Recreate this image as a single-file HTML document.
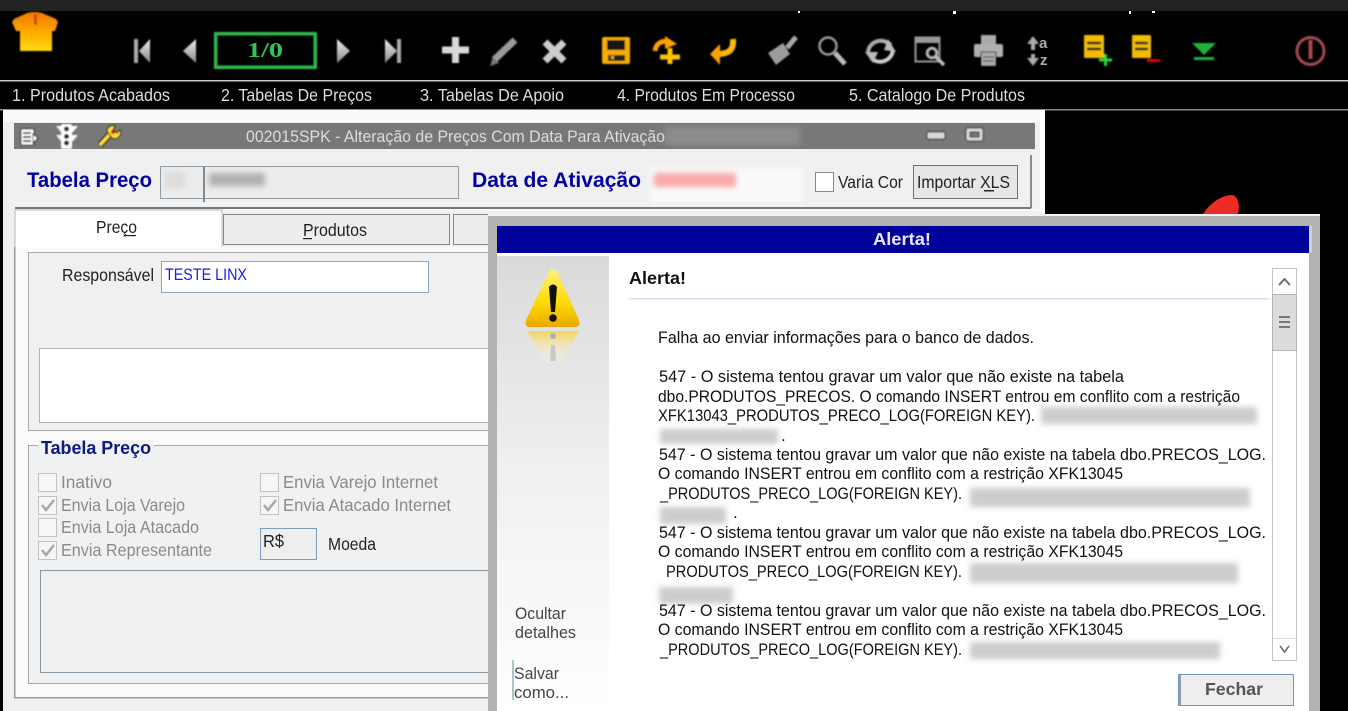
<!DOCTYPE html>
<html lang="pt"><head><meta charset="utf-8"><title>Alerta</title>
<style>
html,body{margin:0;padding:0;width:1348px;height:711px;overflow:hidden;background:#000}
svg{display:block}
text{font-family:"Liberation Sans",sans-serif;font-size:16.5px;fill:#1c1c1c;white-space:pre}
.m{fill:#ddd;font-size:17.5px}
.g{fill:#8a8a8a;font-size:17.5px}
.b{font-weight:bold;fill:#0000a0;font-size:21px}
.t{fill:#111;font-size:17px}
.d{font-size:17.5px;fill:#222}
.l{font-size:17px;fill:#444}
</style></head><body>
<svg width="1348" height="711" viewBox="0 0 1348 711" xmlns="http://www.w3.org/2000/svg">
<defs>
<filter id="s" x="-10%" y="-10%" width="120%" height="120%"><feGaussianBlur stdDeviation="0.8"/></filter>
<filter id="b" x="-20%" y="-50%" width="140%" height="200%"><feGaussianBlur stdDeviation="3"/></filter>
<filter id="t" x="-5%" y="-20%" width="110%" height="140%"><feGaussianBlur stdDeviation="0.3"/></filter>
<linearGradient id="sh" x1="0" y1="0" x2="0" y2="1"><stop offset="0" stop-color="#f07800"/><stop offset=".5" stop-color="#ffa800"/><stop offset="1" stop-color="#ffdc10"/></linearGradient>
<linearGradient id="gr" x1="0" y1="0" x2="0" y2="1"><stop offset="0" stop-color="#eee"/><stop offset="1" stop-color="#888"/></linearGradient>
<linearGradient id="pn" x1="0" y1="0" x2="0" y2="1"><stop offset="0" stop-color="#dadada"/><stop offset=".45" stop-color="#efefef"/><stop offset="1" stop-color="#fff"/></linearGradient>
<linearGradient id="wa" x1="0" y1="0" x2="0" y2="1"><stop offset="0" stop-color="#fff27a"/><stop offset=".6" stop-color="#ffd800"/><stop offset="1" stop-color="#e8a800"/></linearGradient>
<linearGradient id="wr" x1="0" y1="0" x2="0" y2="1"><stop offset="0" stop-color="#f2d35a"/><stop offset="1" stop-color="#fff" stop-opacity="0"/></linearGradient>
</defs>
<rect width="1348" height="711" fill="#000"/>
<rect width="1348" height="11" fill="#222"/>
<g fill="#fff"><rect x="798" y="11" width="2" height="2"/><rect x="953" y="11" width="3" height="3"/><rect x="1129" y="11" width="2" height="3"/><rect x="1152" y="11" width="3" height="2"/></g>

<!-- toolbar -->
<g filter="url(#s)">
<path d="M27 13 Q34 11 42 13 L56 19 L58 22 L55 31 L52 31 L52 51 L20 51 L20 31 L16 31 L12 22 L14 19 Z" fill="url(#sh)"/>
<path d="M34 14 l3 0 l0 11 l-3 0z" fill="#d84c00"/>
<g fill="#aaa">
<rect x="134" y="39" width="4" height="24"/><path d="M150 39 V63 L139 51Z" fill="url(#gr)"/>
<path d="M196 39 V63 L183 51Z" fill="url(#gr)"/>
<path d="M337 39 V63 L350 51Z" fill="url(#gr)"/>
<path d="M385 39 V63 L397 51Z" fill="url(#gr)"/><rect x="397" y="39" width="4" height="24"/>
</g>
<rect x="215.500" y="33.500" width="100" height="34" fill="#000" stroke="#2ebd4c" stroke-width="3"/>
<path d="M442 50 H469 M455.500 37 V63" stroke="#d8d8d8" stroke-width="7"/>
<path d="M494 60 L515 40" stroke="#999" stroke-width="7"/><path d="M490 66 l3 -9 l6 6z" fill="#777"/>
<path d="M545 42 L564 61 M564 42 L545 61" stroke="#ccc" stroke-width="7"/>
<rect x="602" y="37" width="28" height="27" rx="2" fill="#f5ae00"/><rect x="607" y="40" width="18" height="10" fill="#151515"/><rect x="608" y="55" width="17" height="6" fill="#222"/><rect x="611" y="56" width="3" height="3" fill="#f5ae00"/>
<path d="M655 51 C656 43 662 40 670 42" fill="none" stroke="#ff9f00" stroke-width="5"/><path d="M665 36 L677 44 L665 49Z" fill="#ff9f00"/><path d="M660 57 H680 M670 48 V64" stroke="#ffc000" stroke-width="5"/>
<path d="M733 39 C734 49 730 54 717 54" fill="none" stroke="#ffb800" stroke-width="6"/><path d="M720 44 L710 54 L720 65Z" fill="#ff9f00"/>
<path d="M768 53 L783 43 L790 54 L776 65Z" fill="#9c9c9c"/><path d="M787 48 L796 37" stroke="#a8a8a8" stroke-width="5"/>
<circle cx="828" cy="46" r="8.500" fill="none" stroke="#999" stroke-width="2.500"/><path d="M835 53 L845 64" stroke="#bbb" stroke-width="5"/>
<path d="M868 52 C869 43 880 36 891 45" fill="none" stroke="#aaa" stroke-width="4"/><path d="M893 50 C892 60 880 66 871 58" fill="none" stroke="#ccc" stroke-width="4"/><path d="M888 39 L896 52 L884 50Z" fill="#bbb"/><path d="M865 52 L878 52 L873 63Z" fill="#bbb"/>
<rect x="915.500" y="37.500" width="24" height="24" fill="none" stroke="#999" stroke-width="2"/><rect x="916" y="38" width="23" height="5" fill="#999"/><circle cx="932" cy="53" r="5" fill="#000" stroke="#bbb" stroke-width="2.500"/><path d="M936 57 L944 65" stroke="#bbb" stroke-width="3.500"/>
<rect x="981" y="35" width="15" height="10" fill="#aaa"/><rect x="974" y="44" width="29" height="13" rx="2" fill="#b0b0b0"/><rect x="981" y="52" width="15" height="14" fill="#aaa" stroke="#000"/><path d="M983 57 h11 M983 61 h11" stroke="#333"/>
<path d="M1033 36 l6 8 h-4 v6 h-4 v-6 h-4z M1033 66 l6 -8 h-4 v-4 h-4 v4 h-4z" fill="#aaa"/>
<rect x="1084" y="35" width="20" height="23" rx="1" fill="#f2bd00"/><path d="M1087 43 h14 M1087 49 h14" stroke="#222" stroke-width="2.500"/><path d="M1099 60 h13 M1105.500 54 v12" stroke="#1edc3c" stroke-width="3"/>
<rect x="1132" y="35" width="19" height="23" rx="1" fill="#f2bd00"/><path d="M1135 43 h13 M1135 49 h13" stroke="#222" stroke-width="2.500"/><rect x="1147" y="59" width="13" height="3" fill="#e00010"/>
<path d="M1192 43 H1216 L1204 55Z M1194 57 H1214 V60 H1194Z" fill="#1fb43a"/>
<circle cx="1310.500" cy="51" r="13.500" fill="none" stroke="#a84a50" stroke-width="3"/><path d="M1310.500 40 V59" stroke="#a84a50" stroke-width="4"/>
</g>
<text x="1039" y="48" style="font-size:15px;font-weight:bold;fill:#aaa">a</text>
<text x="1040" y="65" style="font-size:15px;font-weight:bold;fill:#aaa">z</text>
<text x="247" y="57" textLength="36" lengthAdjust="spacingAndGlyphs" style="font-family:'Liberation Serif',serif;font-weight:bold;font-size:21px;fill:#33c454">1/0</text>

<!-- menu -->
<rect y="80" width="1348" height="1.500" fill="#c8c8c8"/>
<rect y="109" width="1348" height="1.500" fill="#8a8a8a"/>
<g filter="url(#t)">
<text class="m" x="12" y="101" textLength="158" lengthAdjust="spacingAndGlyphs">1. Produtos Acabados</text>
<text class="m" x="221" y="101" textLength="151" lengthAdjust="spacingAndGlyphs">2. Tabelas De Preços</text>
<text class="m" x="420" y="101" textLength="144" lengthAdjust="spacingAndGlyphs">3. Tabelas De Apoio</text>
<text class="m" x="617" y="101" textLength="178" lengthAdjust="spacingAndGlyphs">4. Produtos Em Processo</text>
<text class="m" x="849" y="101" textLength="176" lengthAdjust="spacingAndGlyphs">5. Catalogo De Produtos</text>
</g>

<!-- main window -->
<rect x="3" y="110" width="1042" height="601" fill="#f0f0f0"/>
<rect x="3" y="110" width="1042" height="12" fill="#fafafa"/>
<rect x="1040" y="110" width="5" height="110" fill="#fff"/>
<rect x="14" y="123" width="1021" height="26" fill="#787878"/>
<rect x="665" y="127" width="135" height="18" fill="#8c8c8c" filter="url(#b)"/>
<text x="246" y="142" textLength="419" lengthAdjust="spacingAndGlyphs" style="fill:#dcdcdc;font-size:16.500px">002015SPK - Alteração de Preços Com Data Para Ativação</text>
<g filter="url(#s)">
<rect x="21" y="129" width="13" height="16" rx="1" fill="#fff" stroke="#000"/><path d="M23 133 h8 M23 137 h8 M23 141 h8" stroke="#000" stroke-width="1.500"/><path d="M33 134 l5 4 -5 5z" fill="#fff" stroke="#000"/>
<rect x="61" y="124" width="11" height="25" rx="2" fill="#fff"/><path d="M56 126 h22 l-5 6 h-12z M56 135 h22 l-5 6 h-12z" fill="#fff"/><circle cx="66.500" cy="129" r="2.500" fill="#222"/><circle cx="66.500" cy="136.500" r="2.500" fill="#222"/><circle cx="66.500" cy="143" r="2.500" fill="#222"/>
<path d="M100 145 L111 133" stroke="#000" stroke-width="6"/><path d="M100 145 L111 133" stroke="#ffe23c" stroke-width="3.500"/><path d="M107 131 a6 6 0 0 1 8 -5 l-2 4 4 3 3 -3 a6 6 0 0 1 -8 8z" fill="#ffe23c" stroke="#000"/><circle cx="113" cy="132" r="2" fill="#d01010"/>
<rect x="927" y="132" width="18" height="7" rx="1" fill="#d8d8d8" stroke="#000"/>
<rect x="966" y="128" width="17" height="13" rx="2" fill="#d8d8d8" stroke="#000"/><rect x="970" y="132" width="9" height="5" fill="#777" stroke="#000"/>
</g>

<!-- header fields -->
<text class="b" x="27" y="187" textLength="125" lengthAdjust="spacingAndGlyphs">Tabela Preço</text>
<rect x="160.500" y="166.500" width="298" height="32" fill="#ececec" stroke="#8f9ca6"/>
<rect x="203" y="166" width="2" height="36" fill="#7e8a94"/>
<rect x="165" y="172" width="20" height="16" fill="#dcdcdc" filter="url(#b)"/>
<rect x="209" y="173" width="56" height="13" fill="#b0b0b0" filter="url(#b)"/>
<text class="b" x="472" y="187" textLength="169" lengthAdjust="spacingAndGlyphs">Data de Ativação</text>
<rect x="650" y="168" width="152" height="34" fill="#fafafa" filter="url(#b)"/>
<rect x="654" y="173" width="82" height="14" fill="#f8a8a8" filter="url(#b)"/>
<rect x="815.500" y="172.500" width="18" height="19" fill="#fff" stroke="#888"/>
<text class="d" x="838" y="188" textLength="65" lengthAdjust="spacingAndGlyphs">Varia Cor</text>
<rect x="913.500" y="165.500" width="104" height="33" fill="#e6e6e6" stroke="#707070"/>
<text class="d" x="917" y="188" textLength="93" lengthAdjust="spacingAndGlyphs">Importar XLS</text>
<rect x="984" y="190" width="10" height="1.500" fill="#222"/>
<rect x="1030" y="155" width="2" height="53" fill="#8a8a8a"/>
<rect x="15" y="207" width="1016" height="2" fill="#777"/>

<!-- tabs -->
<rect x="15" y="209" width="1025" height="2" fill="#fafafa"/>
<rect x="15" y="247" width="474" height="450" fill="#fbfbfb"/>
<rect x="15" y="210" width="207" height="38" fill="#fff"/>
<path d="M15 248 V210 H222 V247" fill="none" stroke="#b8b8b8"/>
<text class="d" x="96" y="233" textLength="41" lengthAdjust="spacingAndGlyphs">Preço</text>
<rect x="124" y="235" width="12" height="1.200" fill="#222"/>
<rect x="223.500" y="214.500" width="226" height="30" fill="#ededed" stroke="#858585"/>
<text class="d" x="303" y="236" textLength="64" lengthAdjust="spacingAndGlyphs">Produtos</text>
<rect x="303" y="238" width="9" height="1.200" fill="#222"/>
<rect x="453.500" y="214.500" width="60" height="30" fill="#ededed" stroke="#858585"/>
<rect x="14" y="247" width="1.500" height="451" fill="#9a9a9a"/>
<rect x="14" y="697" width="476" height="1.500" fill="#9a9a9a"/>

<!-- group 1 -->
<rect x="28.500" y="252.500" width="470" height="178" fill="#f0f0f0" stroke="#a8a8a8"/>
<text class="d" x="62" y="281" textLength="92" lengthAdjust="spacingAndGlyphs">Responsável</text>
<rect x="161.500" y="261.500" width="267" height="31" fill="#fff" stroke="#8ba6bd"/>
<text x="165" y="280" textLength="82" lengthAdjust="spacingAndGlyphs" style="font-size:17px;fill:#1a1aee">TESTE LINX</text>
<rect x="39.500" y="348.500" width="460" height="74" fill="#fff" stroke="#aeb4ba"/>

<!-- group 2 -->
<rect x="28.500" y="445.500" width="470" height="238" fill="#f0f1f3" stroke="#a8a8a8"/>
<rect x="38" y="440" width="116" height="16" fill="#f2f2f4"/>
<text x="41" y="454" textLength="110" lengthAdjust="spacingAndGlyphs" style="font-size:18px;font-weight:bold;fill:#0a1a80">Tabela Preço</text>
<g fill="#f6f6f6" stroke="#c2c2c2">
<rect x="38.500" y="473.500" width="18" height="18"/><rect x="38.500" y="496.500" width="18" height="18"/><rect x="38.500" y="518.500" width="18" height="18"/><rect x="38.500" y="541.500" width="18" height="18"/><rect x="260.500" y="473.500" width="18" height="18"/><rect x="260.500" y="496.500" width="18" height="18"/>
</g>
<g fill="none" stroke="#a8a8a8" stroke-width="2.500">
<path d="M42 505 l4 5 l8 -10"/><path d="M42 550 l4 5 l8 -10"/><path d="M264 505 l4 5 l8 -10"/>
</g>
<text class="g" x="61" y="488" textLength="51" lengthAdjust="spacingAndGlyphs">Inativo</text>
<text class="g" x="61" y="511" textLength="124" lengthAdjust="spacingAndGlyphs">Envia Loja Varejo</text>
<text class="g" x="61" y="533" textLength="138" lengthAdjust="spacingAndGlyphs">Envia Loja Atacado</text>
<text class="g" x="61" y="556" textLength="151" lengthAdjust="spacingAndGlyphs">Envia Representante</text>
<text class="g" x="283" y="488" textLength="155" lengthAdjust="spacingAndGlyphs">Envia Varejo Internet</text>
<text class="g" x="283" y="511" textLength="168" lengthAdjust="spacingAndGlyphs">Envia Atacado Internet</text>
<rect x="260.500" y="528.500" width="56" height="31" fill="#eceef0" stroke="#7f9db8"/>
<text class="d" x="263" y="547" textLength="21" lengthAdjust="spacingAndGlyphs">R$</text>
<text class="d" x="328" y="550" textLength="48" lengthAdjust="spacingAndGlyphs">Moeda</text>
<rect x="40.500" y="570.500" width="460" height="102" fill="#eef0f2" stroke="#8a949c"/>

<!-- red shape -->
<path d="M1203 214 C1210 203 1222 195 1232 195 C1238 196 1240 204 1238 214Z" fill="#ee2b24"/>

<!-- dialog -->
<rect x="488" y="214" width="832" height="497" fill="#b2b2b2"/>
<rect x="488" y="214" width="832" height="2" fill="#f4f4f4"/>
<rect x="497" y="226" width="812" height="485" fill="#fff"/>
<rect x="497" y="226" width="812" height="27" fill="#00009a"/>
<rect x="1309" y="226" width="3" height="27" fill="#d0d4dc"/>
<text x="873" y="245" textLength="58" lengthAdjust="spacingAndGlyphs" style="font-size:17.500px;font-weight:bold;fill:#e8e8ff">Alerta!</text>
<rect x="497" y="256" width="112" height="455" fill="url(#pn)"/>

<!-- warning -->
<path d="M553 269 C556 269 558 273 560 278 L578 318 C581 325 579 327 574 327 H531 C526 327 524 325 527 318 L546 278 C548 273 550 269 553 269Z" fill="url(#wa)"/>
<path d="M549 287 Q553 282 557 287 L555 312 H551Z" fill="#111"/><circle cx="553" cy="318" r="3.800" fill="#111"/>
<path d="M527 331 H579 L560 365 H546Z" fill="url(#wr)"/>
<circle cx="553" cy="336" r="3" fill="#b0b0b8"/><path d="M551 345 h4 l1 16 h-6z" fill="#c8c8cc"/>

<!-- redacted regions, painted beneath the message text -->
<g fill="#cccccc" filter="url(#b)">
<rect x="1041" y="407" width="216" height="17"/>
<rect x="660" y="429" width="118" height="15"/>
<rect x="970" y="488" width="280" height="19"/>
<rect x="660" y="507" width="66" height="17"/>
<rect x="970" y="563" width="268" height="20"/>
<rect x="659" y="587" width="74" height="17"/>
<rect x="970" y="642" width="250" height="17"/>
</g>

<!-- alert text -->
<text x="629" y="284" textLength="57" lengthAdjust="spacingAndGlyphs" style="font-size:17.500px;font-weight:bold;fill:#111">Alerta!</text>
<rect x="629" y="298" width="640" height="1.500" fill="#d8d8f0"/>
<g>
<text class="t" x="658" y="343" textLength="376" lengthAdjust="spacingAndGlyphs">Falha ao enviar informações para o banco de dados.</text>
<text class="t" x="659" y="382" textLength="465" lengthAdjust="spacingAndGlyphs">547 - O sistema tentou gravar um valor que não existe na tabela</text>
<text class="t" x="658" y="402" textLength="582" lengthAdjust="spacingAndGlyphs">dbo.PRODUTOS_PRECOS. O comando INSERT entrou em conflito com a restrição</text>
<text class="t" x="658" y="421" textLength="377" lengthAdjust="spacingAndGlyphs">XFK13043_PRODUTOS_PRECO_LOG(FOREIGN KEY).</text>
<text class="t" x="781" y="441">.</text>
<text class="t" x="659" y="460" textLength="607" lengthAdjust="spacingAndGlyphs">547 - O sistema tentou gravar um valor que não existe na tabela dbo.PRECOS_LOG.</text>
<text class="t" x="658" y="479" textLength="465" lengthAdjust="spacingAndGlyphs">O comando INSERT entrou em conflito com a restrição XFK13045</text>
<text class="t" x="660" y="499" textLength="302" lengthAdjust="spacingAndGlyphs">_PRODUTOS_PRECO_LOG(FOREIGN KEY).</text>
<text class="t" x="733" y="518">.</text>
<text class="t" x="659" y="538" textLength="607" lengthAdjust="spacingAndGlyphs">547 - O sistema tentou gravar um valor que não existe na tabela dbo.PRECOS_LOG.</text>
<text class="t" x="658" y="557" textLength="465" lengthAdjust="spacingAndGlyphs">O comando INSERT entrou em conflito com a restrição XFK13045</text>
<text class="t" x="666" y="577" textLength="296" lengthAdjust="spacingAndGlyphs">PRODUTOS_PRECO_LOG(FOREIGN KEY).</text>
<text class="t" x="659" y="616" textLength="607" lengthAdjust="spacingAndGlyphs">547 - O sistema tentou gravar um valor que não existe na tabela dbo.PRECOS_LOG.</text>
<text class="t" x="658" y="635" textLength="465" lengthAdjust="spacingAndGlyphs">O comando INSERT entrou em conflito com a restrição XFK13045</text>
<text class="t" x="660" y="655" textLength="302" lengthAdjust="spacingAndGlyphs">_PRODUTOS_PRECO_LOG(FOREIGN KEY).</text>
</g>

<!-- scrollbar -->
<rect x="1272.500" y="268.500" width="24" height="392" fill="#fff" stroke="#c4c4c4"/>
<rect x="1272.500" y="294.500" width="24" height="56" fill="#dcdcdc" stroke="#b4b4b4"/>
<path d="M1279 285 L1284.500 279 L1290 285" fill="none" stroke="#666" stroke-width="1.800"/>
<path d="M1279 317 h11 M1279 322 h11 M1279 327 h11" stroke="#777" stroke-width="2"/>
<path d="M1280 646 L1284.500 652 L1289 646" fill="none" stroke="#666" stroke-width="1.500"/>
<rect x="1273" y="638" width="23" height="1" fill="#ddd"/>

<!-- side links -->
<text class="l" x="515" y="619" textLength="51" lengthAdjust="spacingAndGlyphs">Ocultar</text>
<text class="l" x="515" y="638" textLength="61" lengthAdjust="spacingAndGlyphs">detalhes</text>
<rect x="512" y="660" width="2" height="40" fill="#a9c6cf"/>
<text class="l" x="514" y="679" textLength="45" lengthAdjust="spacingAndGlyphs">Salvar</text>
<text class="l" x="514" y="698" textLength="55" lengthAdjust="spacingAndGlyphs">como...</text>

<!-- button -->
<rect x="1178.500" y="674.500" width="115" height="31" fill="#eeeeee" stroke="#6c9ac2"/>
<rect x="1179" y="675" width="2" height="30" fill="#9a9a9a"/>
<text x="1205" y="695" textLength="58" lengthAdjust="spacingAndGlyphs" style="font-size:17.500px;font-weight:bold;fill:#555">Fechar</text>
</svg>
</body></html>
